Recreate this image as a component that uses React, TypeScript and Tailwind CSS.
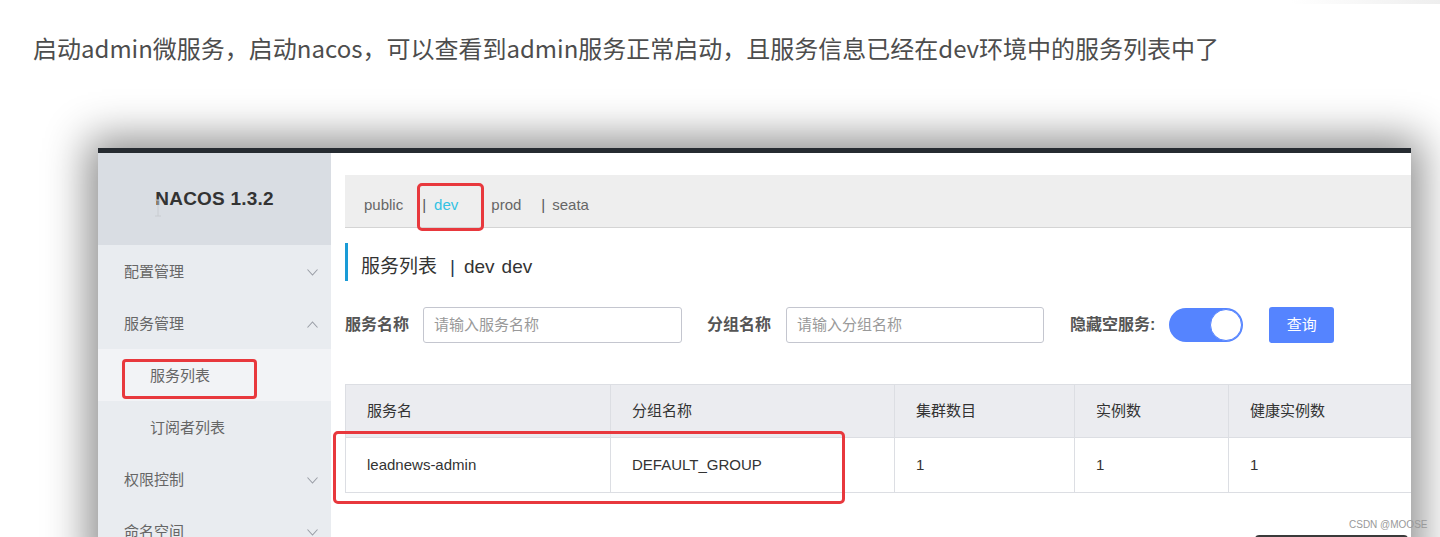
import React from "react";

const ui = "font-['Liberation_Sans','Noto_Sans_CJK_SC',sans-serif]";

function Chevron({ up }: { up?: boolean }) {
  return (
    <svg width="11" height="7" viewBox="0 0 11 7" className="text-[#9a9ea6]">
      <polyline
        points={up ? "0.5,6.5 5.5,1 10.5,6.5" : "0.5,0.5 5.5,6 10.5,0.5"}
        fill="none"
        stroke="currentColor"
        strokeWidth="1.1"
      />
    </svg>
  );
}

function MenuItem({ label, open, sub, active }: { label: string; open?: boolean; sub?: boolean; active?: boolean }) {
  return (
    <div
      className={`h-[52px] flex items-center justify-between pt-[2px] pr-[13px] text-[15px] text-[#666] ${
        sub ? "pl-[52px]" : "pl-[26px]"
      } ${active ? "bg-[#f2f3f6]" : ""}`}
    >
      <span>{label}</span>
      {!sub && <Chevron up={open} />}
    </div>
  );
}

const cols = [265, 284, 180, 154, 197];

export default function App() {
  return (
    <div className="relative w-[1440px] h-[537px] overflow-hidden bg-white">
      <div className="absolute top-0 right-0 w-[150px] h-[4px] rounded-bl bg-gradient-to-r from-white to-[#eeeeee]" />
      <p className="pl-[33px] pt-[34px] text-[24px] leading-[28px] text-[#4d4d4d] font-['Noto_Sans_CJK_SC',sans-serif]">
        启动admin微服务，启动nacos，可以查看到admin服务正常启动，且服务信息已经在dev环境中的服务列表中了
      </p>

      <div className={`ml-[98px] mt-[86px] w-[1313px] h-[420px] flex flex-col shadow-[0_0_40px_10px_rgba(0,0,0,0.45)] ${ui}`}>
        <div className="h-[5px] bg-[#262b31]" />
        <div className="flex flex-1 min-h-0">
          {/* sidebar */}
          <div className="relative w-[233px] shrink-0 bg-[#e9ecf0]">
            <div className="relative h-[92px] bg-[#d9dde3] flex items-center justify-center">
              <span className="text-[19px] font-bold text-[#333] tracking-[0.2px]">NACOS 1.3.2</span>
              <svg width="8" height="18" viewBox="0 0 8 18" className="absolute left-[56px] top-[46px]">
                <path d="M1 1h6M4 1v16M1 17h6" stroke="#c9ccd1" strokeWidth="1" fill="none" />
              </svg>
            </div>
            <MenuItem label="配置管理" />
            <MenuItem label="服务管理" open />
            <MenuItem label="服务列表" sub active />
            <MenuItem label="订阅者列表" sub />
            <MenuItem label="权限控制" />
            <MenuItem label="命名空间" />
            <div className="absolute left-[24px] top-[206px] w-[135px] h-[40px] rounded-[4px] border-[3px] border-[#e8383d]" />
          </div>

          {/* main */}
          <div className="flex-1 min-w-0 overflow-hidden bg-white pl-[14px] pt-[22px]">
            <div className="relative h-[53px] bg-[#eeeeee] border-b border-[#d4d4d4] flex items-center pt-[8px] text-[15px] text-[#666]">
              <span className="ml-[19px]">public</span>
              <span className="ml-[19px]">
                <span className="text-[#555]">|</span>
                <span className="ml-[8px] text-[#33c2e3]">dev</span>
              </span>
              <span className="ml-[33px]">prod</span>
              <span className="ml-[20px]">
                <span className="text-[#555]">|</span>
                <span className="ml-[7px]">seata</span>
              </span>
              <div className="absolute left-[72px] top-[8px] w-[67px] h-[48px] rounded-[5px] border-[3px] border-[#e8383d]" />
            </div>

            <div className="mt-[15px] h-[38px] border-l-[3px] border-[#1a9bd6] pl-[13px] pt-[10px] flex items-center text-[19px] text-[#333]">
              <span>服务列表</span>
              <span className="ml-[13px] text-[#2b3a55]">|</span>
              <span className="ml-[9px]">dev</span>
              <span className="ml-[7px]">dev</span>
            </div>

            <div className="mt-[26px] h-[36px] flex items-center text-[15px]">
              <span className="text-[16px] font-bold text-[#555]">服务名称</span>
              <div className="ml-[14px] w-[259px] h-[36px] border border-[#c4c6cf] rounded-[3px] flex items-center pl-[10px] text-[#999]">
                请输入服务名称
              </div>
              <span className="ml-[25px] text-[16px] font-bold text-[#555]">分组名称</span>
              <div className="ml-[15px] w-[258px] h-[36px] border border-[#c4c6cf] rounded-[3px] flex items-center pl-[10px] text-[#999]">
                请输入分组名称
              </div>
              <span className="ml-[26px] text-[16px] font-bold text-[#555]">隐藏空服务:</span>
              <div className="ml-[14px] w-[74px] h-[34px] rounded-full bg-[#5584ff] flex items-center justify-end pr-[1px]">
                <div className="w-[32px] h-[32px] rounded-full bg-white border border-[#5584ff]" />
              </div>
              <div className="ml-[26px] w-[65px] h-[36px] rounded-[3px] bg-[#5584ff] flex items-center justify-center text-white">
                查询
              </div>
            </div>

            <div className="relative mt-[41px] w-[1080px] text-[15px] text-[#333]">
              <div className="flex h-[54px] bg-[#ebecf0] border border-[#dcdee3]">
                {["服务名", "分组名称", "集群数目", "实例数", "健康实例数"].map((h, i) => (
                  <div
                    key={h}
                    style={{ width: cols[i] }}
                    className="shrink-0 flex items-center pl-[21px] border-r border-[#dcdee3]"
                  >
                    {h}
                  </div>
                ))}
              </div>
              <div className="flex h-[55px] bg-white border border-t-0 border-[#dcdee3]">
                {["leadnews-admin", "DEFAULT_GROUP", "1", "1", "1"].map((v, i) => (
                  <div
                    key={i}
                    style={{ width: cols[i] }}
                    className="shrink-0 flex items-center pl-[21px] border-r border-[#dcdee3]"
                  >
                    {v}
                  </div>
                ))}
              </div>
              <div className="absolute left-[-12px] top-[47px] w-[512px] h-[73px] rounded-[5px] border-[3px] border-[#e8383d]" />
            </div>

            <div className="mt-[42px] ml-[910px] w-[153px] h-[30px] rounded-t-[4px] border-t-2 border-[#3a3a3a]" />
          </div>
        </div>
      </div>

      <span className="absolute left-[1349px] top-[517px] text-[10px] text-[#999] font-['Liberation_Sans',sans-serif]">
        CSDN @MOOSE
      </span>
    </div>
  );
}
